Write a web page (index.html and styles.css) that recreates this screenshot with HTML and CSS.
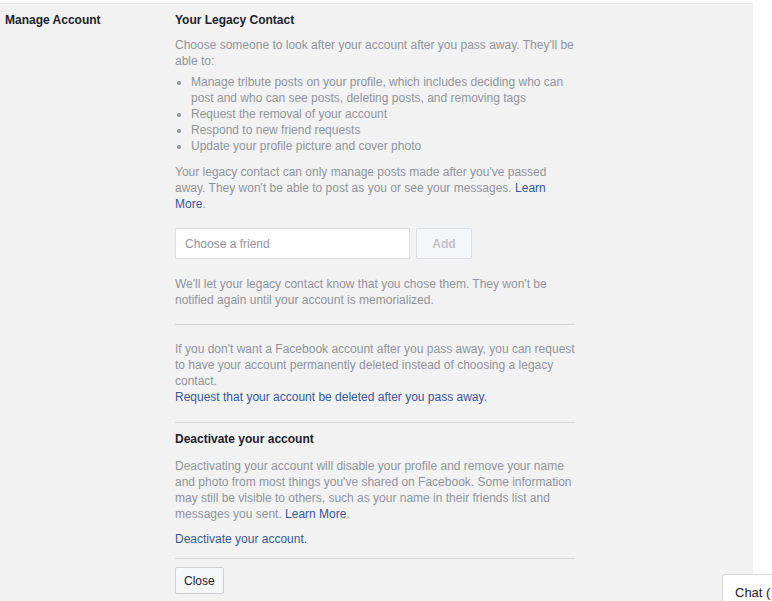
FILE: index.html
```html
<!DOCTYPE html>
<html>
<head>
<meta charset="utf-8">
<link rel="stylesheet" href="styles.css">
</head>
<body>
<div class="panel">
  <div class="label">Manage Account</div>
  <div class="content">
    <div class="heading">Your Legacy Contact</div>
    <p class="intro">Choose someone to look after your account after you pass away. They'll be able to:</p>
    <ul class="list">
      <li>Manage tribute posts on your profile, which includes deciding who can post and who can see posts, deleting posts, and removing tags</li>
      <li>Request the removal of your account</li>
      <li>Respond to new friend requests</li>
      <li>Update your profile picture and cover photo</li>
    </ul>
    <p class="note">Your legacy contact can only manage posts made after you've passed away. They won't be able to post as you or see your messages. <a class="link" href="#">Learn More</a>.</p>
    <div class="picker">
      <div class="input">Choose a friend</div>
      <div class="add">Add</div>
    </div>
    <p class="notify">We'll let your legacy contact know that you chose them. They won't be notified again until your account is memorialized.</p>
    <div class="rule r1"></div>
    <p class="delete">If you don't want a Facebook account after you pass away, you can request to have your account permanently deleted instead of choosing a legacy contact.<br><a class="link" href="#">Request that your account be deleted after you pass away.</a></p>
    <div class="rule r2"></div>
    <div class="heading h2">Deactivate your account</div>
    <p class="deact">Deactivating your account will disable your profile and remove your name and photo from most things you've shared on Facebook. Some information may still be visible to others, such as your name in their friends list and messages you sent. <a class="link" href="#">Learn More</a>.</p>
    <p class="deact-link"><a class="link" href="#">Deactivate your account.</a></p>
    <div class="rule r3"></div>
    <div class="close">Close</div>
  </div>
</div>
<div class="chat">Chat (</div>
</body>
</html>
```

FILE: styles.css
```css
html, body {
  margin: 0;
  padding: 0;
  background: #ffffff;
  height: 601px;
  overflow: hidden;
}
body {
  font-family: "Liberation Sans", Arial, sans-serif;
  font-size: 12px;
  line-height: 16px;
  color: #90949c;
  position: relative;
}
.panel {
  margin-top: 3px;
  width: 753px;
  height: 620px;
  background: #f2f2f2;
  border-top: 1px solid #e8e8e8;
  display: flex;
  box-sizing: border-box;
  padding-top: 8px;
}
.label {
  width: 175px;
  flex-shrink: 0;
  padding-left: 5px;
  box-sizing: border-box;
  font-weight: bold;
  color: #1d2129;
}
.content {
  width: 400px;
}
.heading {
  font-weight: bold;
  color: #1d2129;
}
p {
  margin: 0;
}
.intro {
  margin-top: 9px;
}
.list {
  margin: 5px 0 0 0;
  padding-left: 16px;
}
.note {
  margin-top: 10px;
}
.link {
  color: #365899;
  text-decoration: none;
}
.picker {
  margin-top: 16px;
  display: flex;
  gap: 6px;
}
.input {
  width: 235px;
  height: 31px;
  box-sizing: border-box;
  background: #ffffff;
  border: 1px solid #dddfe2;
  padding: 7px 9px;
  color: #90949c;
}
.add {
  width: 56px;
  height: 31px;
  box-sizing: border-box;
  background: #f5f6f7;
  border: 1px solid #dddfe2;
  border-radius: 2px;
  text-align: center;
  padding-top: 7px;
  font-weight: bold;
  color: #bec2c9;
}
.notify {
  margin-top: 17px;
}
.rule {
  height: 1px;
  background: #d3d4d6;
}
.r1 {
  margin-top: 16px;
}
.delete {
  margin-top: 16px;
}
.r2 {
  margin-top: 17px;
}
.h2 {
  margin-top: 8px;
}
.deact {
  margin-top: 11px;
}
.deact-link {
  margin-top: 9px;
}
.r3 {
  margin-top: 11px;
}
.close {
  margin-top: 8px;
  display: inline-block;
  box-sizing: border-box;
  height: 27px;
  padding: 5px 8px;
  background: #f6f7f9;
  border: 1px solid #ced0d4;
  border-radius: 2px;
  color: #1d2129;
}
.chat {
  position: absolute;
  left: 722px;
  top: 574px;
  width: 80px;
  height: 40px;
  box-sizing: border-box;
  background: #ffffff;
  border: 1px solid #d6d8db;
  border-radius: 3px 0 0 0;
  padding: 10px 0 0 12px;
  font-size: 13px;
  color: #1d2129;
}
```
